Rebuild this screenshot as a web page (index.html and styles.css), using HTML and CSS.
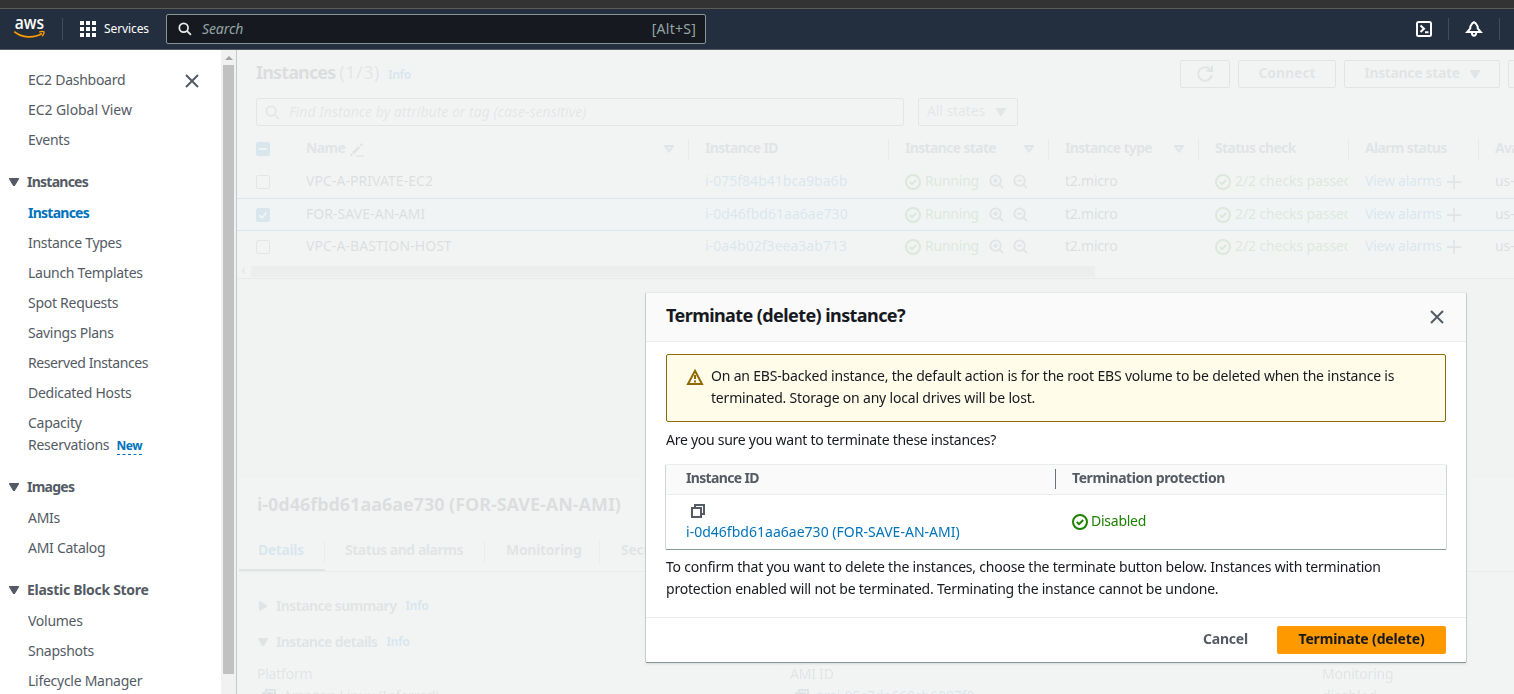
FILE: index.html
```html
<!DOCTYPE html>
<html lang="en">
<head>
<meta charset="utf-8">
<title>Instances | EC2</title>
<link rel="stylesheet" href="styles.css">
</head>
<body>
<svg class="defs" aria-hidden="true">
  <symbol id="search" viewBox="0 0 16 16"><circle cx="6.5" cy="6.5" r="5"/><path d="M10.2 10.2 14.8 14.8"/></symbol>
  <symbol id="close" viewBox="0 0 16 16"><path d="M2 2 14 14M14 2 2 14"/></symbol>
  <symbol id="check" viewBox="0 0 16 16"><circle cx="8" cy="8" r="7"/><path d="M4.8 8 7 10.2 11.2 6"/></symbol>
  <symbol id="zoomin" viewBox="0 0 16 16"><circle cx="7" cy="7" r="5.6"/><path d="M11 11 15 15M4.5 7h5M7 4.5v5"/></symbol>
  <symbol id="zoomout" viewBox="0 0 16 16"><circle cx="7" cy="7" r="5.6"/><path d="M11 11 15 15M4.5 7h5"/></symbol>
  <symbol id="plus" viewBox="0 0 16 16"><path d="M8 0v16M0 8h16"/></symbol>
  <symbol id="copy" viewBox="0 0 16 16"><path d="M2 5h9v9H2zM5 5V2h9v9h-3"/></symbol>
  <symbol id="down" viewBox="0 0 10 8"><path d="M0 0h10v1L5.8 8H4.2L0 1z"/></symbol>
  <symbol id="filter" viewBox="0 0 10 8"><path d="M1.2 1h7.6L5 6.6z"/></symbol>
</svg>

<div class="browser-edge"></div>
<header class="topnav">
  <svg class="logo" viewBox="0 0 32 24"><text x="0.8" y="11.6" textLength="29.4" lengthAdjust="spacingAndGlyphs">aws</text><path class="smile" d="M.3 14.6C8 21.2 20 21.500 28 16.6"/><path class="smile-tip" d="M25.2 15.2c1.800-.9 4-.9 4.800-.4.3 1.200-.5 3.200-1.900 4.500"/></svg>
  <span class="nav-rule"></span>
  <svg class="grid" viewBox="0 0 16 16"><path d="M0 0h4v4H0zM6 0h4v4H6zM12 0h4v4h-4zM0 6h4v4H0zM6 6h4v4H6zM12 6h4v4h-4zM0 12h4v4H0zM6 12h4v4H6zM12 12h4v4h-4z"/></svg>
  <span class="services">Services</span>
  <div class="global-search">
    <svg class="ic"><use href="#search"/></svg>
    <em>Search</em>
    <span class="hint">[Alt+S]</span>
  </div>
  <div class="nav-tools">
    <svg class="ic" viewBox="0 0 16 16"><rect x="1" y="1" width="14" height="14" rx="1.500"/><path d="M4.500 4.500 8 7.700 4.500 11M9 11.300h3.500"/></svg>
    <span class="nav-rule"></span>
    <svg class="ic bell" viewBox="0 0 16 16"><path d="M1.200 11h13.600L11.700 7.300V5.500L9.600 2.300 8 1.200 6.400 2.300 4.300 5.500v1.800zM5.800 11.500c0 4.200 4.400 4.200 4.400 0"/></svg>
    <span class="nav-rule"></span>
  </div>
</header>

<div class="page">
  <nav class="sidebar">
    <svg class="ic side-close"><use href="#close"/></svg>
    <ul class="links">
      <li>EC2 Dashboard</li><li class="wide">EC2 Global View</li><li>Events</li>
    </ul>
    <h3 class="short"><svg><use href="#down"/></svg>Instances</h3>
    <ul class="links">
      <li class="active">Instances</li><li class="semi">Instance Types</li><li>Launch Templates</li><li>Spot Requests</li><li>Savings Plans</li><li class="tight">Reserved Instances</li><li>Dedicated Hosts</li><li>Capacity<br>Reservations <span class="new">New</span></li>
    </ul>
    <h3 class="short"><svg><use href="#down"/></svg>Images</h3>
    <ul class="links"><li>AMIs</li><li>AMI Catalog</li></ul>
    <h3><svg><use href="#down"/></svg>Elastic Block Store</h3>
    <ul class="links"><li>Volumes</li><li>Snapshots</li><li>Lifecycle Manager</li></ul>
  </nav>
  <div class="scrollbar"><span class="arrow-up"></span><span class="thumb"></span></div>

  <div class="stage">
    <main class="content">
      <section class="list">
        <div class="list-head">
          <h1>Instances <span class="count">(1/3)</span></h1><span class="info">Info</span>
          <div class="actions">
            <span class="btn refresh"><svg class="ic" viewBox="0 0 16 16"><path d="M14.700 9A6.800 6.800 0 1 1 13.500 4M9.500 5H15V0"/></svg></span>
            <span class="btn connect">Connect</span>
            <span class="btn state">Instance state<svg class="tri"><use href="#down"/></svg></span>
            <span class="btn more"></span>
          </div>
        </div>
        <div class="filters">
          <div class="find"><svg class="ic"><use href="#search"/></svg><em>Find Instance by attribute or tag (case-sensitive)</em></div>
          <div class="select">All states<svg class="tri"><use href="#down"/></svg></div>
        </div>
        <div class="row thead">
          <div><span class="box dash"></span></div>
          <div class="name-h">Name<svg class="ic pencil" viewBox="0 0 16 16"><path class="fill" d="M0 15.500l1-4 2.800 2.900zM2.200 10.600l7.300-7.300 2.200 2.200-7.300 7.300zM11 1.900l1.800-1.800 2.200 2.200-1.800 1.800z"/><path d="M7 15h9"/></svg><svg class="tri hollow"><use href="#filter"/></svg></div>
          <div>Instance ID</div>
          <div>Instance state<svg class="tri hollow"><use href="#filter"/></svg></div>
          <div>Instance type<svg class="tri hollow"><use href="#filter"/></svg></div>
          <div>Status check</div><div>Alarm status</div><div>Availability</div>
        </div>
        <div class="row">
          <div><span class="box"></span></div><div class="nm">VPC-A-PRIVATE-EC2</div><div class="link">i-075f84b41bca9ba6b</div>
          <div class="ok"><svg class="ic"><use href="#check"/></svg>Running<svg class="ic g"><use href="#zoomin"/></svg><svg class="ic g"><use href="#zoomout"/></svg></div>
          <div>t2.micro</div><div class="ok chk"><svg class="ic"><use href="#check"/></svg>2/2 checks passed</div>
          <div class="link alarm">View alarms<svg class="ic p"><use href="#plus"/></svg></div><div>us-east-1a</div>
        </div>
        <div class="row selected">
          <div><span class="box on"><svg viewBox="0 0 14 14"><path d="M3 7.500 6 10.500 11 4"/></svg></span></div><div class="nm">FOR-SAVE-AN-AMI</div><div class="link">i-0d46fbd61aa6ae730</div>
          <div class="ok"><svg class="ic"><use href="#check"/></svg>Running<svg class="ic g"><use href="#zoomin"/></svg><svg class="ic g"><use href="#zoomout"/></svg></div>
          <div>t2.micro</div><div class="ok chk"><svg class="ic"><use href="#check"/></svg>2/2 checks passed</div>
          <div class="link alarm">View alarms<svg class="ic p"><use href="#plus"/></svg></div><div>us-east-1a</div>
        </div>
        <div class="row last">
          <div><span class="box"></span></div><div class="nm">VPC-A-BASTION-HOST</div><div class="link">i-0a4b02f3eea3ab713</div>
          <div class="ok"><svg class="ic"><use href="#check"/></svg>Running<svg class="ic g"><use href="#zoomin"/></svg><svg class="ic g"><use href="#zoomout"/></svg></div>
          <div>t2.micro</div><div class="ok chk"><svg class="ic"><use href="#check"/></svg>2/2 checks passed</div>
          <div class="link alarm">View alarms<svg class="ic p"><use href="#plus"/></svg></div><div>us-east-1a</div>
        </div>
        <div class="hscroll"><span class="arrow-left"></span><span class="hthumb"></span></div>
      </section>
      <section class="details">
        <h2>i-0d46fbd61aa6ae730 (FOR-SAVE-AN-AMI)</h2>
        <div class="tabs"><span class="tab current">Details</span><span class="tab t2">Status and alarms</span><span class="tab t3">Monitoring</span><span class="tab t4">Security</span></div>
        <h4 class="summary"><svg class="right" viewBox="0 0 8 10"><path d="M0 0h1l7 4.200v1.600L1 10H0z"/></svg>Instance summary<span class="info">Info</span></h4>
        <h4><svg><use href="#down"/></svg>Instance details<span class="info">Info</span></h4>
        <div class="facts">
          <div><p>Platform</p><p class="val"><svg class="ic"><use href="#copy"/></svg>Amazon Linux (Inferred)</p></div>
          <div><p>AMI ID</p><p class="val link"><svg class="ic"><use href="#copy"/></svg>ami-05c7de660cb6887f0</p></div>
          <div><p>Monitoring</p><p class="val plain">disabled</p></div>
        </div>
      </section>
    </main>

    <div class="modal" role="dialog">
      <div class="modal-head"><h2>Terminate (delete) instance?</h2><svg class="ic"><use href="#close"/></svg></div>
      <div class="modal-body">
        <div class="alert">
          <svg class="ic" viewBox="0 0 16 16"><path d="M8 1.800 15 15H1z"/><path d="M8 6v4M8 11.500v2"/></svg>
          <p><span class="a1">On an EBS-backed instance, the default action is for the root EBS volume to be deleted when the instance is</span><br><span class="a2">terminated. Storage on any local drives will be lost.</span></p>
        </div>
        <p class="ask">Are you sure you want to terminate these instances?</p>
        <div class="mtable">
          <div class="mhead"><span class="c1">Instance ID</span><span class="c2">Termination protection</span></div>
          <div class="mrow">
            <div class="c1"><svg class="ic"><use href="#copy"/></svg><span class="mlink">i-0d46fbd61aa6ae730 (FOR-SAVE-AN-AMI)</span></div>
            <div class="c2"><svg class="ic"><use href="#check"/></svg>Disabled</div>
          </div>
        </div>
        <p class="confirm"><span class="p1">To confirm that you want to delete the instances, choose the terminate button below. Instances with termination</span><br><span class="p2">protection enabled will not be terminated. Terminating the instance cannot be undone.</span></p>
      </div>
      <div class="modal-foot"><span class="cancel">Cancel</span><span class="primary">Terminate (delete)</span></div>
    </div>
  </div>
</div>
</body>
</html>
```
FILE: styles.css
```css
* { box-sizing: border-box; }
body { margin: 0; height: 694px; overflow: hidden; display: flex; flex-direction: column; background: #f1f3f3; color: #16191f; font: 14px/22px "Noto Sans", "Open Sans", sans-serif; letter-spacing: -0.23px; }
h1, h2, h3, h4, p, ul { margin: 0; padding: 0; }
ul { list-style: none; }
svg { fill: none; stroke: currentColor; stroke-width: 2; overflow: visible; flex: none; }
.ic { width: 16px; height: 16px; }
.defs { position: absolute; width: 0; height: 0; }

/* Top navigation */
.browser-edge { height: 9px; flex: none; background: #333; border-bottom: 1px solid #5c5b56; }
.topnav { height: 41px; flex: none; display: flex; align-items: center; background: #232f3e; border-bottom: 1px solid #545b64; color: #fff; }
.topnav > * { flex: none; }
.logo { width: 32px; height: 24px; margin: 0 16px 0 14px; }
.logo text { font: 600 18px "Open Sans", sans-serif; fill: #fff; stroke: none; letter-spacing: 0; }
.smile { stroke: #f90; stroke-width: 1.8; }
.smile-tip { stroke: #f90; stroke-width: 1.4; }
.nav-rule { width: 1px; height: 22px; background: #414d5c; }
.grid { width: 16px; height: 16px; margin-left: 17px; fill: #fff; stroke: none; }
.services { width: 62px; margin-left: 8px; font-size: 12px; letter-spacing: -0.1px; }
.global-search { width: 540px; height: 30px; display: flex; align-items: center; padding: 0 9px 0 11px; background: #16191f; border: 1px solid #879596; border-radius: 2px; }
.global-search em { margin-left: 9px; color: #95a5a6; letter-spacing: -0.1px; }
.global-search .ic { width: 14px; height: 14px; margin-right: 1px; color: #eaeded; }
.hint { margin-left: auto; color: #95a5a6; letter-spacing: 0.25px; }
.nav-tools { display: flex; align-items: center; margin-left: 710px; }
.nav-tools .ic { margin-right: 16px; }
.nav-tools .bell { margin-right: 17px; }
.nav-tools .nav-rule { margin-right: 17px; }

.page { flex: 1; display: flex; min-height: 0; }

/* Sidebar */
.sidebar { width: 221px; padding-top: 19px; background: #fff; color: #545b64; position: relative; }
.side-close { position: absolute; left: 184px; top: 23px; }
.links li { padding-left: 28px; margin-bottom: 8px; letter-spacing: -0.27px; }
.links .wide { letter-spacing: -0.07px; }
.links .tight { letter-spacing: -0.4px; }
.links .semi { letter-spacing: -0.3px; }
.sidebar h3 { display: flex; align-items: center; margin: 20px 0 9px; padding-left: 9px; font-size: 14px; line-height: 22px; letter-spacing: -0.3px; }
.sidebar h3.short { letter-spacing: -0.75px; }
.sidebar h3 svg { width: 10px; height: 8px; margin-right: 8px; fill: currentColor; stroke: none; }
.links .active { color: #0073bb; font-weight: 700; letter-spacing: -0.75px; }
.new { margin-left: 4px; font-size: 12px; line-height: 16px; font-weight: 700; color: #0073bb; border-bottom: 1px dashed #0073bb; letter-spacing: -0.5px; display: inline-block; }
.scrollbar { width: 15px; display: flex; flex-direction: column; align-items: center; background: #f1f1f1; }
.arrow-up { margin: 6px 0 5px; border: 4px solid transparent; border-top: 0; border-bottom-color: #a3a3a3; }
.thumb { width: 11px; height: 609px; margin-left: 0; background: #c1c1c1; }

/* Page content behind the dialog */
.stage { flex: 1; position: relative; overflow: hidden; border-left: 1px solid #c4caca; }
.content { width: 1290px; height: 644px; opacity: .1; display: flex; flex-direction: column; justify-content: space-between; }
.list { height: 229px; background: #fafafa; border-bottom: 1px solid #879596; }
.list-head { height: 48px; padding: 10px 0 0 19px; display: flex; align-items: flex-start; }
h1 { font-size: 18px; line-height: 25px; letter-spacing: -0.85px; }
.count { font-weight: 400; color: #687078; letter-spacing: 0.5px; }
.info { font-size: 12px; font-weight: 700; color: #0073bb; letter-spacing: -0.4px; }
.list-head .info { margin: 4px 0 0 8px; }
.actions { margin-left: auto; display: flex; gap: 8px; padding-right: 0; width: 347px; flex: none; }
.btn { height: 28px; padding-bottom: 2px; border: 1px solid #545b64; border-radius: 2px; color: #545b64; font-weight: 700; display: flex; align-items: center; justify-content: center; flex: none; background: #fff; }
.refresh { width: 50px; padding: 0; }
.connect { width: 98px; letter-spacing: -0.05px; }
.state { width: 156px; letter-spacing: -0.35px; }
.more { width: 60px; }
.tri { width: 10px; height: 8px; fill: currentColor; stroke: none; }
.state .tri { margin-left: 10px; margin-top: 1px; }
.filters { display: flex; gap: 14px; padding-left: 19px; height: 34px; }
.find, .select { height: 28px; background: #fff; border: 1px solid #687078; border-radius: 2px; display: flex; align-items: center; color: #687078; }
.find { width: 648px; padding-left: 8px; }
.find .ic { width: 15px; height: 15px; margin-right: 1px; }
.find em { margin-left: 8px; letter-spacing: 0.02px; }
.select { width: 100px; padding: 0 0 2px 8px; letter-spacing: -0.1px; }
.select .tri { margin: 1px 0 0 11px; }
.row { display: grid; grid-template-columns: 53px 399px 200px 160px 150px 150px 130px 48px; height: 32px; border-bottom: 1px solid #fff; }
.row > div { display: flex; align-items: center; padding: 0 0 1px 16px; white-space: nowrap; overflow: hidden; }
.row > div:first-child { padding: 1px 0 0 19px; }
.row > .link { letter-spacing: 0.02px; }
.row > .alarm { letter-spacing: -0.23px; }
.thead { height: 34px; border-top: 1px solid #eaeded; border-bottom-color: #eaeded; font-weight: 700; color: #545b64; letter-spacing: -0.66px; }
.thead > div { padding-bottom: 2px; background: linear-gradient(#879596, #879596) 100% 6px / 1px 20px no-repeat; }
.thead > div:first-child { padding-top: 0; background: linear-gradient(#eaeded, #eaeded) 100% 6px / 1px 20px no-repeat; }
.pencil { width: 14px; height: 14px; margin: 3px 0 0 5px; stroke-width: 1.6; }
.pencil .fill { fill: currentColor; stroke: none; }
.hollow { margin: 2px 15px 0 auto; fill: none; stroke: currentColor; }
.row.selected { border-top: 1px solid #0073bb; border-bottom-color: #0073bb; height: 33px; background: #f1faff; box-shadow: -1px 0 #0073bb; }
.nm { letter-spacing: 0.05px; }
.link { color: #0073bb; }
.ok { color: #1d8102; }
.ok .ic { margin: 1px 4px 0 0; width: 16px; }
.ok .g { width: 15px; height: 15px; margin: 0; color: #545b64; }
.ok .ic + .g { margin-left: 9px; }
.ok .ic:nth-of-type(2) { margin-left: 10px; }
.row > .ok.chk { margin-right: 1px; letter-spacing: -0.1px; }
.p { width: 14px; height: 14px; margin: 1px 0 0 5px; color: #545b64; }
.box { width: 14px; height: 14px; border: 1px solid #687078; border-radius: 2px; display: flex; align-items: center; }
.box.on, .box.dash { background: #0073bb; border-color: #0073bb; color: #fff; }
.dash::before { content: ""; width: 8px; height: 2px; margin-left: 2px; background: #fff; }
.hscroll { height: 12px; margin-top: 2px; display: flex; align-items: center; }
.arrow-left { border: 4px solid transparent; border-left: 0; border-right-color: #a3a3a3; margin: 0 6px 0 4px; }
.hthumb { width: 844px; height: 11px; background: #c1c1c1; }
.details { height: 218px; background: #fafafa; border-top: 1px solid #d5dbdb; }
.details h2 { padding: 15px 0 0 20px; font-size: 18px; line-height: 24px; letter-spacing: -0.03px; }
.tabs { height: 35px; margin: 21px 0 0 2px; display: flex; border-bottom: 1px solid #aab7b8; color: #545b64; font-weight: 700; }
.tab { padding-left: 21px; line-height: 26px; background: linear-gradient(#aab7b8, #aab7b8) 100% 4px / 1px 22px no-repeat; flex: none; }
.tab.current { width: 86px; padding-left: 19px; color: #0073bb; letter-spacing: -0.4px; box-shadow: inset 0 -2px #545b64; }
.t2 { width: 160px; padding-left: 20px; letter-spacing: -0.46px; }
.t3 { width: 115px; letter-spacing: -0.3px; }
.details h4 { display: flex; align-items: center; padding-left: 21px; font-size: 14px; line-height: 22px; margin-bottom: 9px; color: #545b64; letter-spacing: -0.62px; }
.details h4.summary { margin: 23px 0 14px; }
.details h4 svg { width: 10px; height: 8px; margin-right: 8px; fill: currentColor; stroke: none; }
.details h4 .right { width: 8px; height: 10px; margin: 0 9px 0 1px; }
.details h4 .info { margin-left: 9px; }
.facts { display: grid; grid-template-columns: 525px 532px 1fr; padding-left: 19px; padding-top: 1px; color: #545b64; }
.facts > div { padding-left: 1px; }
.facts > div + div { border-left: 1px solid #eaeded; padding-left: 8px; }
.val { display: flex; align-items: center; padding-left: 4px; letter-spacing: -0.1px; }
.val.plain { padding-left: 0; }
.val .ic { margin-right: 6px; }
.val.link .ic { color: #545b64; }

/* Dialog */
.modal { position: absolute; left: 409px; top: 243px; width: 820px; height: 369px; display: flex; flex-direction: column; background: #fff; box-shadow: 0 1px #879596, 1px 0 #c5cdcf, -1px 0 #c5cdcf, 0 -1px #e6e9e9, 0 2px 2px rgba(0, 28, 36, .12); }
.modal-head { height: 49px; padding: 0 21px 4px 20px; display: flex; align-items: center; justify-content: space-between; background: #fafafa; border-bottom: 1px solid #eaeded; }
.modal-head h2 { font-size: 18px; letter-spacing: -0.58px; }
.modal-head .ic { color: #545b64; margin-top: 4px; }
.modal-body { flex: 1; padding: 12px 20px 0; }
.alert { height: 68px; padding: 10px 0 0 20px; display: flex; gap: 8px; background: #fffce9; border: 1px solid #906806; border-radius: 2px; }
.alert .ic { margin-top: 4px; color: #906806; }
.alert p { white-space: nowrap; }
.a1 { letter-spacing: -0.19px; }
.a2 { letter-spacing: -0.19px; }
.ask { margin: 7px 0 14px; letter-spacing: -0.27px; }
.mtable { height: 84px; background: #fff; box-shadow: 0 1px #879596, 1px 0 #d0d6d8, -1px 0 #d0d6d8, 0 -1px #eaeded; }
.mhead { height: 30px; padding-bottom: 3px; display: flex; align-items: center; background: #fafafa; border-bottom: 1px solid #eaeded; color: #545b64; font-weight: 700; }
.c1 { width: 390px; padding-left: 20px; }
.c2 { padding-left: 16px; }
.mhead .c1 { background: linear-gradient(#687078, #687078) 100% 2px / 1px 20px no-repeat; letter-spacing: -0.65px; }
.mhead .c2 { letter-spacing: -0.42px; }
.mrow { display: flex; align-items: center; height: 52px; }
.mrow .c1 { display: flex; flex-direction: column; padding-top: 4px; }
.mrow .c1 .ic { margin: 0 0 2px 4px; color: #545b64; }
.mlink { color: #0073bb; letter-spacing: 0.02px; }
.mrow .c2 { display: flex; align-items: center; gap: 3px; color: #1d8102; letter-spacing: -0.25px; }
.mrow .c2 .ic { margin-top: 1px; }
.confirm { margin-top: 7px; white-space: nowrap; }
.p1 { letter-spacing: -0.22px; }
.modal-foot { height: 45px; display: flex; align-items: center; justify-content: flex-end; padding-right: 20px; border-top: 1px solid #eaeded; font-weight: 700; }
.cancel { color: #545b64; margin-right: 29px; padding-bottom: 2px; letter-spacing: -0.2px; }
.primary { width: 169px; height: 28px; line-height: 26px; text-align: center; background: #f90; border-radius: 2px; letter-spacing: -0.15px; }
```
